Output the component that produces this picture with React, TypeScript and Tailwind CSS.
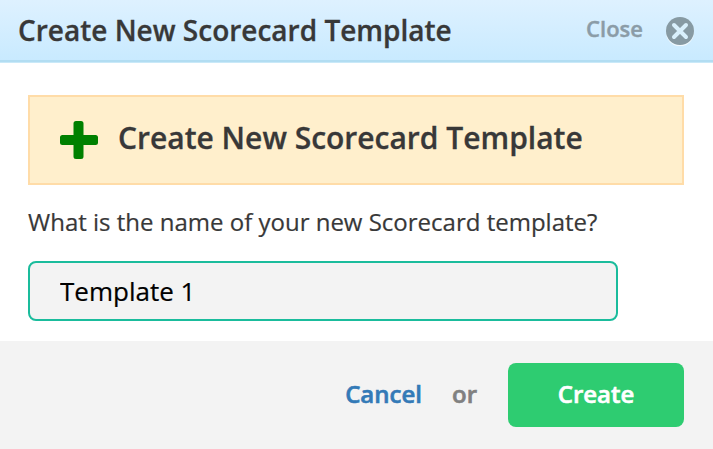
export default function App() {
  return (
    <div className="flex h-[449px] w-[713px] flex-col overflow-hidden bg-white font-['Open_Sans',sans-serif] text-[#383838]">
      <header className="flex h-[63px] shrink-0 items-start justify-between border-b border-[#c9e9f8] bg-linear-to-b from-[#def1ff] to-[#c8eaff] px-[18px] shadow-[inset_0_-2px_0_#b2ddf2]">
        <h1 className="mt-[10px] text-[28px] leading-[40px] font-semibold whitespace-nowrap [-webkit-text-stroke:0.3px]">Create New Scorecard Template</h1>
        <button className="flex items-start gap-[22px] text-[#8b9ca7]">
          <span className="mt-[13px] text-[22px] leading-[30px] font-semibold [-webkit-text-stroke:0.4px]">Close</span>
          <svg className="mt-4 size-[30px]" viewBox="0 0 30 30">
            <circle cx="15" cy="16.3" r="14" fill="#f1faff" />
            <circle cx="15" cy="15" r="14" fill="#879aa3" />
            <path d="M9 9l12 12M21 9L9 21" stroke="#d9f0fc" strokeWidth="4" strokeLinecap="round" />
          </svg>
        </button>
      </header>
      <main className="flex h-[278px] shrink-0 flex-col px-7 pt-8">
        <section className="flex h-[90px] w-[656px] shrink-0 items-start border-2 border-[#ffdca8] bg-[#ffefcc] pl-[29px]">
          <svg className="mt-[23px] size-[40px]" viewBox="0 0 40 40">
            <path d="M17 1h5q2.5 0 2.5 2.5V15h12q2.5 0 2.5 2.5v5q0 2.5-2.5 2.5h-12v11.500q0 2.500-2.500 2.500h-5q-2.500 0-2.500-2.500V25h-11q-2.500 0-2.500-2.500v-5q0-2.500 2.500-2.500h11V3.500Q14.500 1 17 1z" fill="#008000" />
          </svg>
          <h2 className="mt-[20px] ml-[19px] text-[30px] leading-[42px] font-semibold whitespace-nowrap [-webkit-text-stroke:0.3px]">Create New Scorecard Template</h2>
        </section>
        <label className="mt-[19px] text-[24px] leading-[36px] whitespace-nowrap [-webkit-text-stroke:0.2px]" htmlFor="name">What is the name of your new Scorecard template?</label>
        <input id="name" defaultValue="Template 1" className="mt-[21px] h-[60px] w-[590px] shrink-0 rounded-lg border-2 border-[#1abc9c] bg-[#f3f3f3] px-[30px] text-[26px] text-black outline-none [-webkit-text-stroke:0.2px]" />
      </main>
      <footer className="flex h-[108px] items-start justify-end bg-[#f3f3f3] pt-[22px] pr-[29px] text-[24px] leading-[62px] font-semibold [-webkit-text-stroke:0.6px]">
        <a className="text-[#337ab7]">Cancel</a>
        <span className="ml-[30px] text-[#808080]">or</span>
        <button className="ml-[31px] h-16 w-44 rounded-lg bg-[#2ecc71] pb-0.5 text-white">Create</button>
      </footer>
    </div>
  );
}
